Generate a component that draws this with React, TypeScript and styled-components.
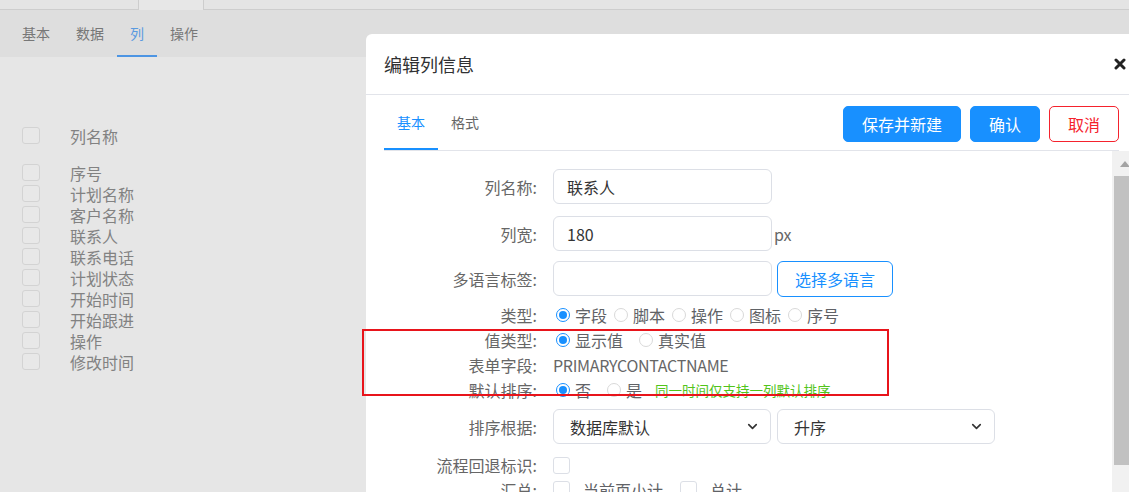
import styled, { createGlobalStyle } from "styled-components";
import { ChevronDown } from "lucide-react";

const GlobalStyle = createGlobalStyle`
  html, body {
    margin: 0;
    padding: 0;
  }
  body {
    font-family: "Noto Sans CJK SC", "Noto Sans", sans-serif;
    overflow: hidden;
  }
  * {
    box-sizing: border-box;
  }
`;

const backTabs = ["基本", "数据", "列", "操作"];
const columns = [
  "序号",
  "计划名称",
  "客户名称",
  "联系人",
  "联系电话",
  "计划状态",
  "开始时间",
  "开始跟进",
  "操作",
  "修改时间",
];

const CloseIcon = () => (
  <svg width="12" height="12" viewBox="0 0 12 12">
    <path
      d="M2 2 L10 10 M10 2 L2 10"
      stroke="#222"
      strokeWidth="3"
      strokeLinecap="round"
    />
  </svg>
);

const App = () => {
  return (
    <Page>
      <GlobalStyle />
      <TopStrip>
        <StripTab />
      </TopStrip>
      <TabBand>
        {backTabs.map((t) => (
          <BandTab key={t} $active={t === "列"}>
            {t}
          </BandTab>
        ))}
      </TabBand>
      <ListPanel>
        <ListRow $head>
          <ListBox />
          <ListText>列名称</ListText>
        </ListRow>
        {columns.map((c, i) => (
          <ListRow key={i}>
            <ListBox />
            <ListText>{c}</ListText>
          </ListRow>
        ))}
      </ListPanel>

      <Modal>
        <ModalHeader>
          <Title>编辑列信息</Title>
          <CloseIcon />
        </ModalHeader>
        <Toolbar>
          <TabList>
            <TabItem $active>基本</TabItem>
            <TabItem>格式</TabItem>
          </TabList>
          <ButtonGroup>
            <Button $variant="primary">保存并新建</Button>
            <Button $variant="primary">确认</Button>
            <Button $variant="danger">取消</Button>
          </ButtonGroup>
        </Toolbar>
        <Body>
          <Form>
            <FormRow $h={35}>
              <Label>列名称:</Label>
              <Input readOnly value="联系人" />
            </FormRow>
            <FormRow $h={35} $mt={12}>
              <Label>列宽:</Label>
              <Input readOnly value="180" />
              <Suffix>px</Suffix>
            </FormRow>
            <FormRow $h={35} $mt={10}>
              <Label>多语言标签:</Label>
              <Input readOnly value="" />
              <OutlineButton>选择多语言</OutlineButton>
            </FormRow>
            <FormRow $h={25} $mt={6}>
              <Label>类型:</Label>
              {["字段", "脚本", "操作", "图标", "序号"].map((o, i) => (
                <RadioOption key={o} $gap={4}>
                  <RadioDot $checked={i === 0} />
                  {o}
                </RadioOption>
              ))}
            </FormRow>
            <FormRow $h={25}>
              <Label>值类型:</Label>
              <RadioOption $gap={13}>
                <RadioDot $checked />
                显示值
              </RadioOption>
              <RadioOption $gap={13}>
                <RadioDot />
                真实值
              </RadioOption>
            </FormRow>
            <FormRow $h={25}>
              <Label>表单字段:</Label>
              <PlainText>PRIMARYCONTACTNAME</PlainText>
            </FormRow>
            <FormRow $h={25}>
              <Label>默认排序:</Label>
              <RadioOption $gap={13}>
                <RadioDot $checked />否
              </RadioOption>
              <RadioOption $gap={13}>
                <RadioDot />是
              </RadioOption>
              <Hint>同一时间仅支持一列默认排序</Hint>
            </FormRow>
            <FormRow $h={35} $mt={7}>
              <Label>排序根据:</Label>
              <SelectBox>
                <span>数据库默认</span>
                <ChevronDown size={15} strokeWidth={2.6} color="#333" />
              </SelectBox>
              <SelectBox $ml={6}>
                <span>升序</span>
                <ChevronDown size={15} strokeWidth={2.6} color="#333" />
              </SelectBox>
            </FormRow>
            <FormRow $h={24} $mt={9}>
              <Label>流程回退标识:</Label>
              <Box />
            </FormRow>
            <FormRow $h={25}>
              <Label>汇总:</Label>
              <Box />
              <CheckText>当前页小计</CheckText>
              <Box />
              <CheckText>总计</CheckText>
            </FormRow>
          </Form>
          <ScrollTrack>
            <svg width="10" height="6" viewBox="0 0 10 6">
              <polygon points="5,0 10,6 0,6" fill="#a3a3a3" />
            </svg>
            <ScrollThumb />
          </ScrollTrack>
        </Body>
      </Modal>

      <Annotation />
    </Page>
  );
};

const Page = styled.div`
  position: relative;
  width: 100%;
  height: 492px;
  background: #e6e6e6;
  overflow: hidden;
`;

const TopStrip = styled.div`
  height: 10px;
  display: flex;
  background: #e4e4e4;
  border-bottom: 1px solid #cdcdcd;
`;

const StripTab = styled.div`
  margin-left: 138px;
  width: 66px;
  height: 10px;
  background: #e7e7e7;
  border-left: 1px solid #cdcdcd;
  border-right: 1px solid #cdcdcd;
`;

const TabBand = styled.div`
  height: 47px;
  display: flex;
  padding-left: 9px;
  background: #dedede;
`;

const BandTab = styled.div<{ $active?: boolean }>`
  display: flex;
  align-items: center;
  padding: 0 13px;
  font-size: 14px;
  color: ${(p) => (p.$active ? "#5a9ae0" : "#777")};
  border-bottom: 2px solid ${(p) => (p.$active ? "#4d95e3" : "transparent")};
`;

const ListPanel = styled.div`
  padding: 68px 0 0 22px;
`;

const ListRow = styled.div<{ $head?: boolean }>`
  display: flex;
  align-items: center;
  gap: 30px;
  height: 21px;
  margin-bottom: ${(p) => (p.$head ? "16px" : "0")};
`;

const ListBox = styled.span`
  width: 18px;
  height: 17px;
  border: 1px solid #d3d3d3;
  border-radius: 3px;
  background: #e8e8e8;
`;

const ListText = styled.span`
  font-size: 16px;
  line-height: 20px;
  color: #828282;
`;

const Modal = styled.div`
  position: absolute;
  left: 366px;
  top: 34px;
  width: 771px;
  bottom: 0;
  background: #fff;
  border-radius: 6px 6px 0 0;
  display: flex;
  flex-direction: column;
`;

const ModalHeader = styled.div`
  height: 61px;
  display: flex;
  align-items: center;
  justify-content: space-between;
  padding: 0 11px 0 18px;
  border-bottom: 1px solid #e2e4ea;
`;

const Title = styled.h2`
  margin: 0;
  font-size: 18px;
  font-weight: 400;
  color: #303133;
`;

const Toolbar = styled.div`
  height: 56px;
  margin: 0 18px;
  display: flex;
  justify-content: space-between;
  border-bottom: 1px solid #e2e4ea;
`;

const TabList = styled.div`
  display: flex;
`;

const TabItem = styled.div<{ $active?: boolean }>`
  display: flex;
  align-items: center;
  padding: 0 13px;
  font-size: 14px;
  color: ${(p) => (p.$active ? "#1890ff" : "#666")};
  border-bottom: 2px solid ${(p) => (p.$active ? "#1890ff" : "transparent")};
`;

const ButtonGroup = styled.div`
  display: flex;
  align-items: flex-start;
  gap: 9px;
  padding-top: 11px;
`;

const Button = styled.button<{ $variant: "primary" | "danger" }>`
  height: 36px;
  padding: 0 18px;
  font-family: inherit;
  font-size: 16px;
  border-radius: 5px;
  cursor: pointer;
  background: ${(p) => (p.$variant === "primary" ? "#1890ff" : "#fff")};
  color: ${(p) => (p.$variant === "primary" ? "#fff" : "#f5222d")};
  border: 1px solid ${(p) => (p.$variant === "primary" ? "#1890ff" : "#f5222d")};
`;

const Body = styled.div`
  flex: 1;
  display: flex;
  padding-left: 18px;
  overflow: hidden;
`;

const Form = styled.div`
  flex: 1;
  padding-top: 18px;
  display: flex;
  flex-direction: column;
`;

const FormRow = styled.div<{ $h: number; $mt?: number }>`
  display: flex;
  align-items: center;
  height: ${(p) => p.$h}px;
  margin-top: ${(p) => p.$mt ?? 0}px;
  flex-shrink: 0;
  font-size: 16px;
  line-height: 20px;
  color: #606266;
`;

const Label = styled.label`
  width: 153px;
  margin-right: 16px;
  flex-shrink: 0;
  text-align: right;
  font-size: 16px;
  color: #666;
  white-space: nowrap;
`;

const Input = styled.input`
  width: 219px;
  height: 35px;
  padding: 0 13px;
  border: 1px solid #dcdfe6;
  border-radius: 6px;
  font-family: inherit;
  font-size: 16px;
  color: #333;
  outline: none;
`;

const Suffix = styled.span`
  margin-left: 2px;
  font-size: 16px;
  color: #666;
`;

const OutlineButton = styled.button`
  margin-left: 5px;
  width: 116px;
  height: 36px;
  background: #fff;
  border: 1px solid #1890ff;
  border-radius: 6px;
  color: #1890ff;
  font-family: inherit;
  font-size: 16px;
  cursor: pointer;
`;

const RadioOption = styled.span<{ $gap: number }>`
  display: inline-flex;
  align-items: center;
  margin-right: ${(p) => p.$gap}px;
  font-size: 16px;
  color: #606266;
  white-space: nowrap;
`;

const RadioDot = styled.span<{ $checked?: boolean }>`
  position: relative;
  width: 14px;
  height: 14px;
  margin: 0 5px 0 3px;
  border-radius: 50%;
  border: 1px solid ${(p) => (p.$checked ? "#1890ff" : "#d9d9d9")};
  background: #fff;

  &::after {
    content: "";
    display: ${(p) => (p.$checked ? "block" : "none")};
    position: absolute;
    left: 2px;
    top: 2px;
    width: 8px;
    height: 8px;
    border-radius: 50%;
    background: #1890ff;
  }
`;

const PlainText = styled.span`
  font-size: 16px;
  letter-spacing: -0.3px;
  color: #666;
`;

const Hint = styled.span`
  font-size: 13.5px;
  color: #52c41a;
  white-space: nowrap;
`;

const SelectBox = styled.div<{ $ml?: number }>`
  width: 218px;
  height: 35px;
  margin-left: ${(p) => p.$ml ?? 0}px;
  padding: 0 10px 0 16px;
  display: flex;
  align-items: center;
  justify-content: space-between;
  border: 1px solid #dcdfe6;
  border-radius: 6px;
  font-size: 16px;
  color: #333;
`;

const Box = styled.span`
  width: 17px;
  height: 17px;
  flex-shrink: 0;
  border: 1px solid #dcdfe6;
  border-radius: 3px;
  background: #fff;
`;

const CheckText = styled.span`
  margin: 0 17px 0 13px;
  font-size: 16px;
  color: #606266;
`;

const ScrollTrack = styled.div`
  width: 25px;
  flex-shrink: 0;
  background: #f1f1f1;
  display: flex;
  flex-direction: column;
  align-items: center;
  padding-top: 10px;
`;

const ScrollThumb = styled.div`
  margin-top: 9px;
  width: 21px;
  height: 289px;
  background: #c1c1c1;
`;

const Annotation = styled.div`
  position: absolute;
  left: 362px;
  top: 329px;
  width: 527px;
  height: 67px;
  border: 2px solid #e8141b;
  pointer-events: none;
`;

export default App;
